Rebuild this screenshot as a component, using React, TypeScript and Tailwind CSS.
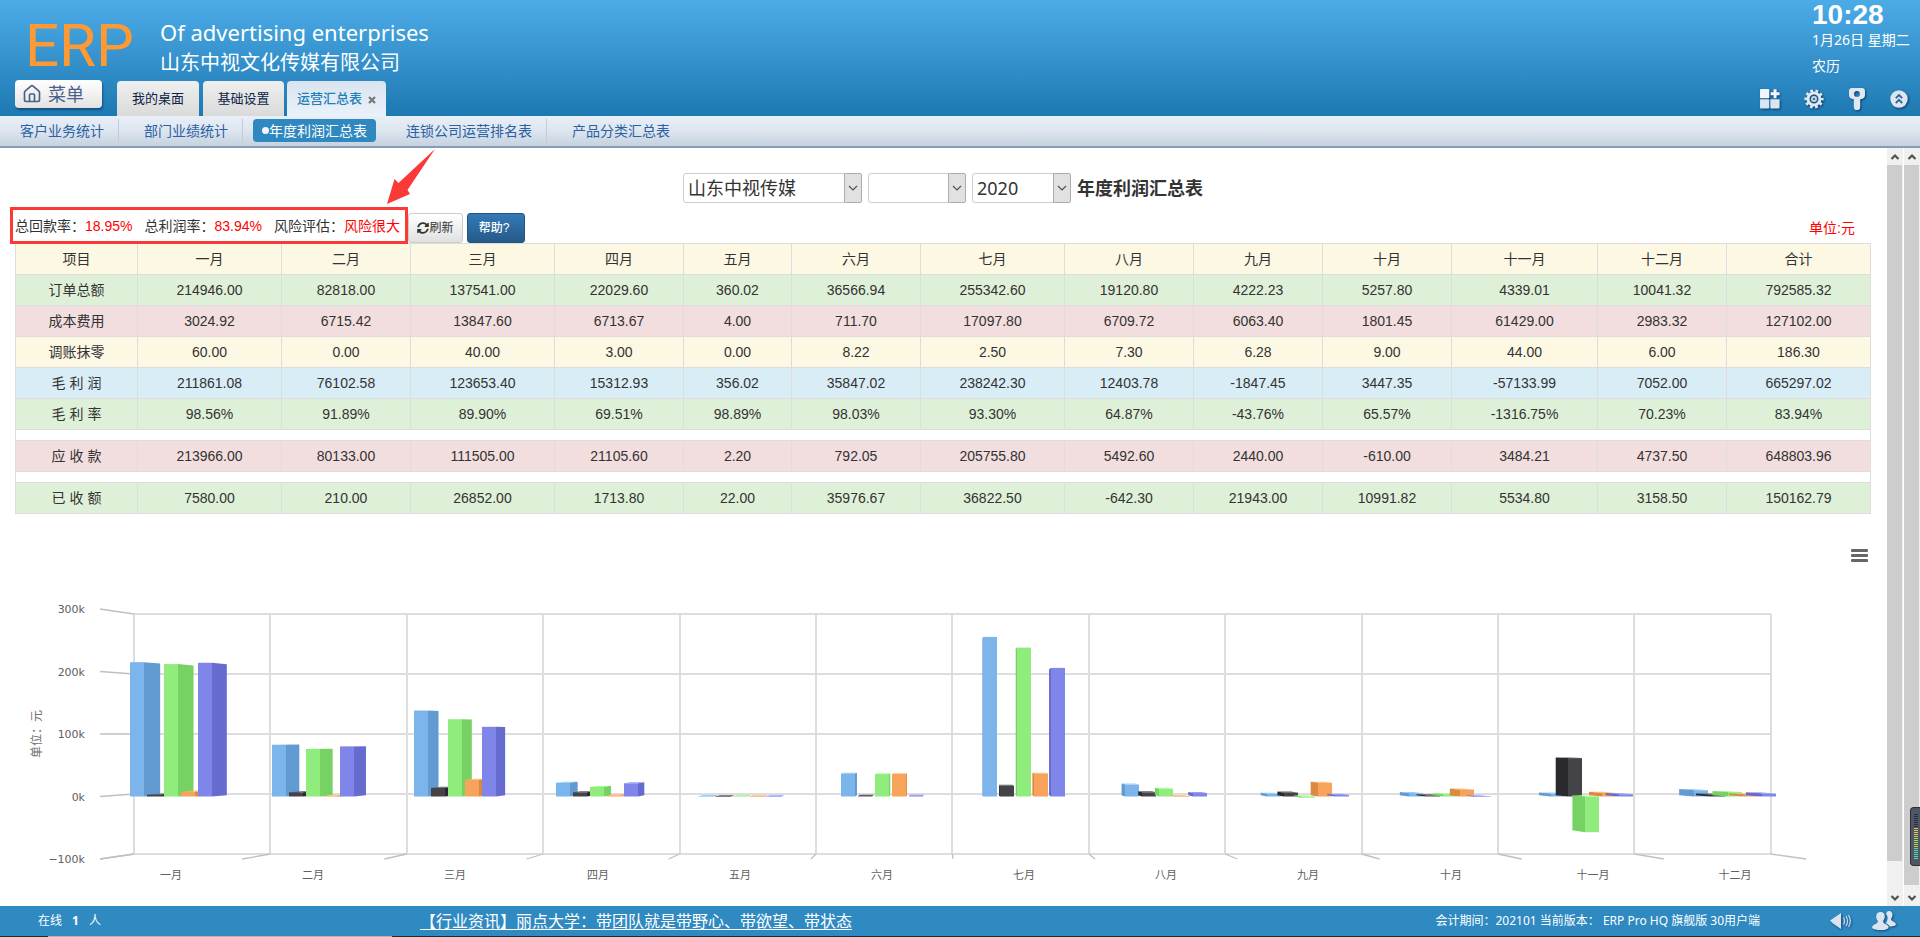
import React from "react";
import { FaSyncAlt } from "react-icons/fa";
import { LuHouse } from "react-icons/lu";

const MONTHS = ["一月", "二月", "三月", "四月", "五月", "六月", "七月", "八月", "九月", "十月", "十一月", "十二月"];

const ROWS: { label: string; tone: string; gap?: boolean; cells: string[] }[] = [
  { label: "订单总额", tone: "bg-[#dff0d8]", cells: ["214946.00", "82818.00", "137541.00", "22029.60", "360.02", "36566.94", "255342.60", "19120.80", "4222.23", "5257.80", "4339.01", "10041.32", "792585.32"] },
  { label: "成本费用", tone: "bg-[#f2dede]", cells: ["3024.92", "6715.42", "13847.60", "6713.67", "4.00", "711.70", "17097.80", "6709.72", "6063.40", "1801.45", "61429.00", "2983.32", "127102.00"] },
  { label: "调账抹零", tone: "bg-[#fcf8e3]", cells: ["60.00", "0.00", "40.00", "3.00", "0.00", "8.22", "2.50", "7.30", "6.28", "9.00", "44.00", "6.00", "186.30"] },
  { label: "毛 利 润", tone: "bg-[#d9edf7]", cells: ["211861.08", "76102.58", "123653.40", "15312.93", "356.02", "35847.02", "238242.30", "12403.78", "-1847.45", "3447.35", "-57133.99", "7052.00", "665297.02"] },
  { label: "毛 利 率", tone: "bg-[#dff0d8]", cells: ["98.56%", "91.89%", "89.90%", "69.51%", "98.89%", "98.03%", "93.30%", "64.87%", "-43.76%", "65.57%", "-1316.75%", "70.23%", "83.94%"] },
  { label: "应 收 款", tone: "bg-[#f2dede]", gap: true, cells: ["213966.00", "80133.00", "111505.00", "21105.60", "2.20", "792.05", "205755.80", "5492.60", "2440.00", "-610.00", "3484.21", "4737.50", "648803.96"] },
  { label: "已 收 额", tone: "bg-[#dff0d8]", gap: true, cells: ["7580.00", "210.00", "26852.00", "1713.80", "22.00", "35976.67", "36822.50", "-642.30", "21943.00", "10991.82", "5534.80", "3158.50", "150162.79"] },
];

const COLUMN_SHARES = [122, 144, 129, 144, 129, 108, 129, 144, 129, 129, 129, 146, 129, 144];

const SERIES = [
  { row: 0, front: "#7cb5ec", side: "#629bd2", top: "#96cfff" },
  { row: 1, front: "#434348", side: "#29292e", top: "#5d5d62" },
  { row: 3, front: "#90ed7d", side: "#76d363", top: "#aaff97" },
  { row: 6, front: "#f7a35c", side: "#dd8942", top: "#ffbd76" },
  { row: 5, front: "#8085e9", side: "#666bcf", top: "#9a9fff" },
];

/* Perspective of the chart: everything recedes towards one vanishing point. */
const CX = 953;
const CY = 204;
const recede = (x: number, y: number, k: number) => [CX + (x - CX) * k, CY + (y - CY) * k];
const valueY = (v: number) => 266.5 - (v * 62.5) / 100000;
const points = (list: number[][]) => list.map((p) => p.join(",")).join(" ");

function Bar({ x, value, front, side, top }: { x: number; value: number; front: string; side: string; top: string }) {
  const w = 14;
  const y0 = valueY(Math.max(value, 0));
  const y1 = Math.max(valueY(Math.min(value, 0)), y0 + 0.4);
  const edge = x > CX ? x : x + w;
  const k = 0.98;
  return (
    <g>
      {y0 > CY && <polygon fill={top} points={points([[x, y0], [x + w, y0], recede(x + w, y0, k), recede(x, y0, k)])} />}
      <polygon fill={side} points={points([[edge, y0], [edge, y1], recede(edge, y1, k), recede(edge, y0, k)])} />
      <rect x={x} y={y0} width={w} height={y1 - y0} fill={front} />
    </g>
  );
}

function Chart() {
  const gridX = Array.from({ length: 13 }, (_, i) => 134 + i * 136.4);
  const levels = [300, 200, 100, 0, -100];
  return (
    <svg viewBox="0 0 1886 376" className="block w-full" role="img" aria-label="年度利润汇总图">
      <g stroke="#dddddd" strokeWidth="2" fill="none">
        {levels.map((l) => {
          const y = Math.round(recede(0, valueY(l * 1000), 0.96)[1]);
          return <line key={l} x1="134" x2="1771" y1={y} y2={y} />;
        })}
        {gridX.map((x) => (
          <line key={x} x1={Math.round(x)} x2={Math.round(x)} y1="84" y2="324" />
        ))}
      </g>
      <g stroke="#c0c0c0" strokeWidth="1.3">
        {levels.map((l) => {
          const y = valueY(l * 1000);
          return <line key={l} x1="100" y1={y} x2="134" y2={recede(0, y, 0.96)[1]} />;
        })}
        {gridX.map((x, i) => (
          <line key={x} x1={x} y1="324" x2={100 + i * 142.17} y2="329" />
        ))}
      </g>
      {MONTHS.map((m, i) =>
        SERIES.map((s, j) => (
          <Bar key={m + j} x={Math.round(129.7 + i * 142.17) + j * 17} value={parseFloat(ROWS[s.row].cells[i])} front={s.front} side={s.side} top={s.top} />
        ))
      )}
      <g fill="#606060" fontSize="11" fontFamily='"DejaVu Sans", "Noto Sans CJK SC", sans-serif'>
        {levels.map((l) => (
          <text key={l} x="85" y={Math.round(valueY(l * 1000)) + 4} textAnchor="end">
            {l < 0 ? `−${-l}k` : `${l}k`}
          </text>
        ))}
        {MONTHS.map((m, i) => (
          <text key={m} x={Math.round(171 + i * 142.17)} y="349" textAnchor="middle">
            {m}
          </text>
        ))}
        <text transform="translate(41 204) rotate(-90)" textAnchor="middle" fontSize="12" fill="#707070">
          单位：元
        </text>
      </g>
      <g fill="#666666">
        <rect x="1851" y="19" width="17" height="3" rx="1" />
        <rect x="1851" y="24" width="17" height="3" rx="1" />
        <rect x="1851" y="29" width="17" height="3" rx="1" />
      </g>
    </svg>
  );
}

function Chevron({ up }: { up?: boolean }) {
  return (
    <svg viewBox="0 0 10 8" className="h-2 w-2.5" fill="none" stroke="#505050" strokeWidth="2.2">
      <path d={up ? "M1.5 6 5 2.5 8.5 6" : "M1.5 2 5 5.5 8.5 2"} />
    </svg>
  );
}

function ScrollBar({ thumb }: { thumb: string }) {
  return (
    <div className="flex w-[17px] flex-col border-l border-white bg-[#f0f0f0]" aria-hidden="true">
      <div className="flex h-[17px] items-center justify-center">
        <Chevron up />
      </div>
      <div className="flex-1">
        <div className={thumb} />
      </div>
      <div className="flex h-4 items-center justify-center">
        <Chevron />
      </div>
    </div>
  );
}

function Picker({ label, options, width }: { label: string; options: string[]; width: string }) {
  return (
    <div className={"relative h-[30px] " + width}>
      <select aria-label={label} className="h-full w-full appearance-none rounded-[3px] border border-[#cccccc] bg-white pl-1 text-lg leading-6 text-[#333333]">
        {options.map((o) => (
          <option key={o}>{o}</option>
        ))}
      </select>
      <span className="pointer-events-none absolute inset-y-0 right-0 flex w-[18px] items-center justify-center rounded-r-[2px] border border-[#adadad] bg-[#e1e1e1]">
        <svg viewBox="0 0 10 8" className="h-2 w-2.5" fill="none" stroke="#505050" strokeWidth="1.2">
          <path d="M1 2 5 6 9 2" />
        </svg>
      </span>
    </div>
  );
}

function Header() {
  return (
    <header className="flex h-[116px] justify-between bg-linear-to-b from-[#4cace8] to-[#1d79b2] text-white">
      <div className="flex flex-col justify-between">
        <div className="flex h-20 pl-[25px]">
          <div className="w-[135px] pt-3.5 font-['Roboto',sans-serif] text-[60px] leading-[64px] text-[#ff9933]">ERP</div>
          <div className="pt-4">
            <div className="text-[22px] leading-8 whitespace-nowrap">Of advertising enterprises</div>
            <div className="text-xl leading-[30px] whitespace-nowrap">山东中视文化传媒有限公司</div>
          </div>
        </div>
        <div className="flex items-end">
          <button className="mr-[15px] mb-2 ml-[15px] flex h-7 w-[87px] items-center gap-1.5 rounded bg-linear-to-b from-white to-[#e6e2e2] pl-[7px] text-lg leading-7 text-[#47638a] shadow-[1px_2px_2px_rgba(0,40,80,0.5)]">
            <LuHouse className="size-5" strokeWidth={2} />
            菜单
          </button>
          <nav className="flex gap-1 text-[13px]">
            <a href="#desktop" className="flex h-[35px] w-[82px] items-center justify-center rounded-t bg-linear-to-b from-[#efefef] to-[#dadada] text-[#0b2345]">我的桌面</a>
            <a href="#settings" className="flex h-[35px] w-[81px] items-center justify-center rounded-t bg-linear-to-b from-[#efefef] to-[#dadada] text-[#0b2345]">基础设置</a>
            <div className="-ml-px flex h-[35px] w-[99px] items-center justify-center gap-1.5 rounded-t bg-linear-to-b from-[#d9e4f0] to-[#eaf2fb] font-medium text-[#217fb9]">
              <a href="#summary">运营汇总表</a>
              <button aria-label="关闭" className="pt-0.5">
                <svg viewBox="0 0 8 8" className="size-2" stroke="#777777" strokeWidth="2.2">
                  <path d="M1 1 7 7M7 1 1 7" />
                </svg>
              </button>
            </div>
          </nav>
        </div>
      </div>
      <div className="flex flex-col justify-between">
        <div className="pl-[70px] text-sm whitespace-nowrap">
          <div className="font-['Liberation_Sans',sans-serif] text-[28px] leading-[30px] font-bold">10:28</div>
          <div className="leading-5">1月26日 星期二</div>
          <div className="mt-1.5 leading-5">农历</div>
        </div>
        <div className="mb-1.5 flex w-[178px] items-center gap-6 pl-[18px] [&_svg]:drop-shadow-[1px_1px_1px_rgba(0,30,70,0.7)]">
          <button aria-label="添加模块">
            <svg viewBox="0 0 20 20" className="size-5" fill="#dbe5f1">
              <rect width="9.3" height="9.3" rx="1" fill="#f2f6fa" />
              <rect y="10.3" width="9.3" height="9.3" rx="1" />
              <rect x="10.3" y="10.3" width="9.3" height="9.3" rx="1" />
              <path d="M13.6 0.3h3v3h3v3h-3v3h-3v-3h-3v-3h3z" fill="#f2f6fa" />
            </svg>
          </button>
          <button aria-label="设置">
            <svg viewBox="-10 -10 20 20" className="size-5" fill="none" stroke="#e2e9f2">
              <circle r="6" strokeWidth="3" />
              <circle r="8.2" strokeWidth="2.8" strokeDasharray="2.7 2.452" strokeDashoffset="1.35" />
              <circle r="2" strokeWidth="2" stroke="#c7d4e4" />
            </svg>
          </button>
          <button aria-label="密码">
            <svg viewBox="-1 0 18 22" className="h-[22px] w-[18px]">
              <path fill="#dfe8f2" fillRule="evenodd" d="M3 0h10a3 3 0 0 1 3 3v3.5a4 4 0 0 1-4 4.5l-.8.6V19a3 3 0 0 1-6.4 0v-7.4L4 11a4 4 0 0 1-4-4.5V3a3 3 0 0 1 3-3zm5 3a2.900 2.900 0 1 0 0 5.800A2.900 2.900 0 0 0 8 3z" />
            </svg>
          </button>
          <button aria-label="收起">
            <svg viewBox="0 0 18 18" className="size-[18px]">
              <circle cx="9" cy="9" r="8.7" fill="#dde6f0" />
              <path d="M5.800 8.200 9 5l3.200 3.200M5.800 13 9 9.800 12.200 13" fill="none" stroke="#2a6a9c" strokeWidth="1.9" />
            </svg>
          </button>
        </div>
      </div>
    </header>
  );
}

function SubNav() {
  return (
    <nav className="flex h-8 items-start border-b-2 border-[#869cb6] bg-linear-to-b from-[#e8eff7] via-[#dde5ef] to-[#c5d2df] pt-[3px] text-sm leading-6 text-[#2a61a3]">
      <a href="#customer" className="border-r border-[#bfccda] pr-3.5 pl-5">客户业务统计</a>
      <a href="#department" className="mr-2.5 border-r border-[#bfccda] pr-3.5 pl-[25px]">部门业绩统计</a>
      <a href="#profit" className="flex h-[23px] w-[123px] items-center justify-center rounded bg-[#2f88c0] text-white">
        <span className="size-[7px] rounded-full bg-[#f0f6fb]" />
        年度利润汇总表
      </a>
      <a href="#ranking" className="border-r border-[#bfccda] pr-3.5 pl-[30px]">连锁公司运营排名表</a>
      <a href="#category" className="pl-[25px]">产品分类汇总表</a>
    </nav>
  );
}

function SummaryBar() {
  return (
    <div className="flex h-9 items-center pr-[31px] pl-2.5 text-sm leading-5">
      <div className="relative flex h-[37px] w-[398px] shrink-0 items-center gap-3 border-3 border-[#fb3a38] pt-0.5 pl-0.5 whitespace-nowrap">
        <span>总回款率：<span className="text-[#ff0000]">18.95%</span></span>
        <span>总利润率：<span className="text-[#ff0000]">83.94%</span></span>
        <span>风险评估：<span className="text-[#ff0000]">风险很大</span></span>
        <svg viewBox="0 0 48 55" className="absolute -top-[61px] right-[-30px] h-[55px] w-12" fill="#fb3a38" aria-hidden="true">
          <path d="M48 0 20.5 41 23 45 0 55 7.5 30 11.5 34z" />
        </svg>
      </div>
      <button className="mt-1.5 flex h-[30px] w-[55px] shrink-0 items-center justify-center rounded-[3px] border border-[#cccccc] bg-linear-to-b from-white to-[#e0e0e0] text-xs">
        <FaSyncAlt className="size-3" />
        刷新
      </button>
      <button className="mt-1.5 ml-1 h-[30px] w-[58px] shrink-0 rounded-[3px] border border-[#245580] bg-linear-to-b from-[#337ab7] to-[#265a88] pr-1 text-xs font-medium text-white">
        帮助?
      </button>
      <span className="mt-1.5 ml-auto text-[#ff0000]">单位:元</span>
    </div>
  );
}

function ProfitTable() {
  const total = COLUMN_SHARES.reduce((a, b) => a + b, 0);
  const cell = "border border-[#dddddd] p-0 text-center font-normal";
  return (
    <div className="pr-[15px] pl-[15px]">
      <table className="w-full table-fixed border-collapse text-sm leading-[30px]">
        <colgroup>
          {COLUMN_SHARES.map((w, i) => (
            <col key={i} style={{ width: `${(w / total) * 100}%` }} />
          ))}
        </colgroup>
        <thead>
          <tr className="bg-[#fcf8e3]">
            {["项目", ...MONTHS, "合计"].map((m) => (
              <th key={m} scope="col" className={cell}>{m}</th>
            ))}
          </tr>
        </thead>
        <tbody>
          {ROWS.map((r) => (
            <React.Fragment key={r.label}>
              {r.gap && (
                <tr className="h-[11px]">
                  <td colSpan={14} className="border border-[#dddddd] p-0" />
                </tr>
              )}
              <tr className={r.tone}>
                <th scope="row" className={cell}>{r.label}</th>
                {r.cells.map((c, i) => (
                  <td key={i} className={cell}>{c}</td>
                ))}
              </tr>
            </React.Fragment>
          ))}
        </tbody>
      </table>
    </div>
  );
}

function Footer() {
  return (
    <footer>
      <div className="flex h-[30px] items-center bg-[#2f8ac2] pl-[38px] text-xs text-white">
        <div className="flex w-[382px] gap-2.5">
          <span>在线</span>
          <b>1</b>
          <span>人</span>
        </div>
        <a href="#news" className="text-base leading-6 underline underline-offset-2">【行业资讯】丽点大学：带团队就是带野心、带欲望、带状态</a>
        <span className="mr-[70px] ml-auto">会计期间：202101 当前版本： ERP Pro HQ 旗舰版 30用户端</span>
        <button aria-label="声音" className="mr-5">
          <svg viewBox="0 0 22 18" className="h-[18px] w-[22px] drop-shadow-[1px_1px_1px_rgba(0,30,70,0.6)]">
            <path d="M0 8.500 3 6.500 11 1v16L3 11.500z" fill="#d9e3ee" />
            <path d="M13.500 5.500q2 3.500 0 7M16 4q3 5 0 10M18.500 3q3.500 6 0 12" fill="none" stroke="#c9dced" strokeWidth="1.2" />
          </svg>
        </button>
        <button aria-label="联系人" className="mr-6">
          <svg viewBox="0 0 24 20" className="h-5 w-6 drop-shadow-[1px_1px_1px_rgba(0,30,70,0.6)]" fill="#dce5ef">
            <path d="M17 0c2.500 0 3.700 1.800 3.500 4-.1 1.600-.8 2.800-1.400 3.600 0 2 .5 2.300 2.400 3.200 1.800.8 2.500 1.700 2.300 3.200-1.200 1.100-3.500 1.500-6.300 1.400-.6-1.600-1.800-2.300-3.700-3.100 1.500-2 2.100-4.300 1.700-6.500-.2-1-.7-2-1.500-2.900C14.400 1 15.500 0 17 0z" />
            <path d="M8.600 1c2.900 0 4.400 2 4.200 4.700-.1 1.700-.9 3.100-1.600 4 0 2.300.6 2.700 2.700 3.600 2 .9 2.900 1.800 2.600 3.600-2 1.700-4.900 2.200-8.200 2.100-3.500 0-6.300-.6-8.200-2.100 0-1.800.8-2.800 2.800-3.600 2-.9 2.900-1.500 2.900-3.600-.9-.9-1.600-2.300-1.600-4C4.200 3 5.700 1 8.600 1z" />
          </svg>
        </button>
      </div>
      <div className="flex h-px bg-[#1f2a25]">
        <div className="ml-12 w-[344px] bg-[#b5b5b5]" />
      </div>
    </footer>
  );
}

function LevelMeter() {
  const bars = Array.from({ length: 23 }, (_, i) => i);
  return (
    <div className="absolute top-[807px] right-0 flex h-[59px] w-2.5 flex-col items-center gap-px rounded-l border border-r-0 border-[#2b2f3a] bg-[#4f5666] pt-1.5" aria-hidden="true">
      {bars.map((i) => (
        <span key={i} className={"h-px w-1 " + (i < 7 ? "bg-[#2b2f3a]" : i < 11 ? "bg-[#e8c840]" : i < 17 ? "bg-[#a5d95a]" : "bg-[#4fdcae]")} />
      ))}
    </div>
  );
}

export default function App() {
  return (
    <div className="relative flex min-h-screen flex-col overflow-hidden bg-white font-['Noto_Sans','Noto_Sans_CJK_SC',sans-serif]">
      <Header />
      <SubNav />
      <div className="flex flex-1">
        <main className="min-w-0 flex-1 font-['Liberation_Sans','Noto_Sans_CJK_SC',sans-serif] text-[#333333]">
          <div className="flex h-[59px] items-start justify-center gap-1.5 pt-[25px] font-['Noto_Sans','Noto_Sans_CJK_SC',sans-serif]">
            <Picker label="公司" options={["山东中视传媒"]} width="w-[179px]" />
            <Picker label="部门" options={[""]} width="w-[98px]" />
            <Picker label="年份" options={["2020"]} width="w-[99px]" />
            <h1 className="text-lg leading-[30px] font-bold">年度利润汇总表</h1>
          </div>
          <SummaryBar />
          <ProfitTable />
          <div className="mt-4">
            <Chart />
          </div>
        </main>
        <ScrollBar thumb="mr-px h-[696px] bg-[#cdcdcd]" />
        <ScrollBar thumb="mr-px h-[720px] bg-[#cdcdcd]" />
      </div>
      <Footer />
      <LevelMeter />
    </div>
  );
}
